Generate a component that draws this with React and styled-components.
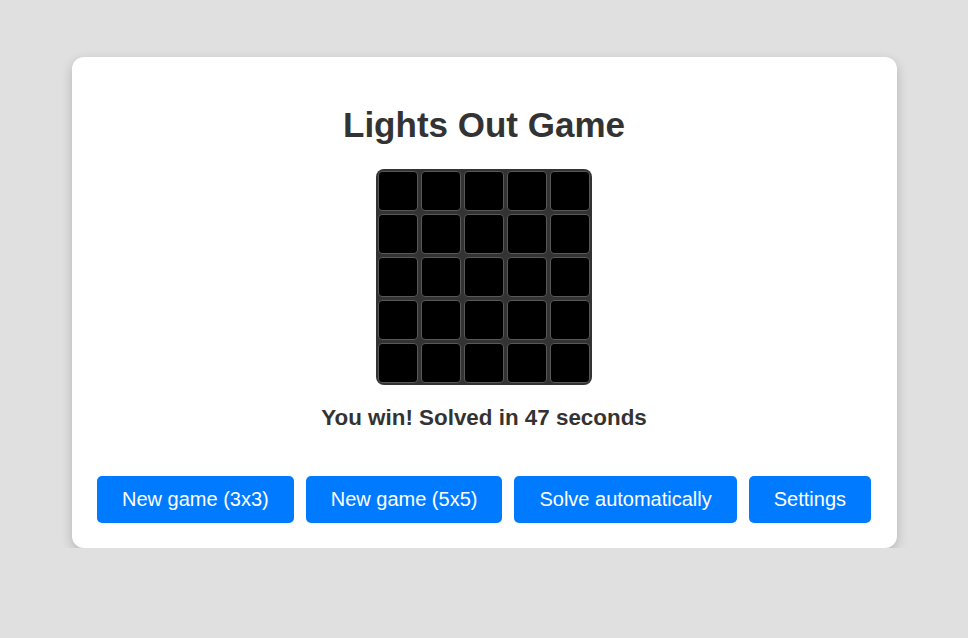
import React from 'react';
import styled, { createGlobalStyle } from 'styled-components';

const GlobalStyle = createGlobalStyle`
  html, body {
    margin: 0;
    padding: 0;
    background: #e0e0e0;
    font-family: "Liberation Sans", Arial, sans-serif;
  }
`;

const Page = styled.div`
  padding-top: 57px;
`;

const Card = styled.div`
  width: 825px;
  margin: 0 auto;
  box-sizing: border-box;
  background: #ffffff;
  border-radius: 12px;
  box-shadow: 0 4px 12px rgba(0, 0, 0, 0.2);
  padding: 25px;
  display: flex;
  flex-direction: column;
  align-items: center;
`;

const Title = styled.h1`
  margin: 23px 0 24px;
  font-size: 35px;
  font-weight: 700;
  color: #333333;
  line-height: 40px;
`;

const Board = styled.div`
  display: grid;
  grid-template-columns: repeat(${props => props.size}, 40px);
  grid-auto-rows: 40px;
  gap: 3px;
  padding: 2px;
  background: #333333;
  border-radius: 8px;
`;

const Cell = styled.div`
  box-sizing: border-box;
  background: ${props => (props.on ? '#ffd43b' : '#000000')};
  border: 1px solid #585858;
  border-radius: 4px;
`;

const Status = styled.p`
  margin: 20px 0 45px;
  font-size: 22.4px;
  font-weight: 700;
  color: #333333;
  line-height: 26px;
`;

const Controls = styled.div`
  display: flex;
  gap: 12px;
  justify-content: center;
`;

const Button = styled.button`
  font-family: "Liberation Sans", Arial, sans-serif;
  font-size: 20px;
  line-height: 23px;
  padding: 12px 25px;
  color: #ffffff;
  background: #007bff;
  border: none;
  border-radius: 5px;
  cursor: pointer;
`;

const App = () => {
  const size = 5;
  const cells = Array.from({ length: size * size }, () => false);

  return (
    <Page>
      <GlobalStyle />
      <Card>
        <Title>Lights Out Game</Title>
        <Board size={size}>
          {cells.map((on, i) => (
            <Cell key={i} on={on} />
          ))}
        </Board>
        <Status>You win! Solved in 47 seconds</Status>
        <Controls>
          <Button>New game (3x3)</Button>
          <Button>New game (5x5)</Button>
          <Button>Solve automatically</Button>
          <Button>Settings</Button>
        </Controls>
      </Card>
    </Page>
  );
};

export default App;
